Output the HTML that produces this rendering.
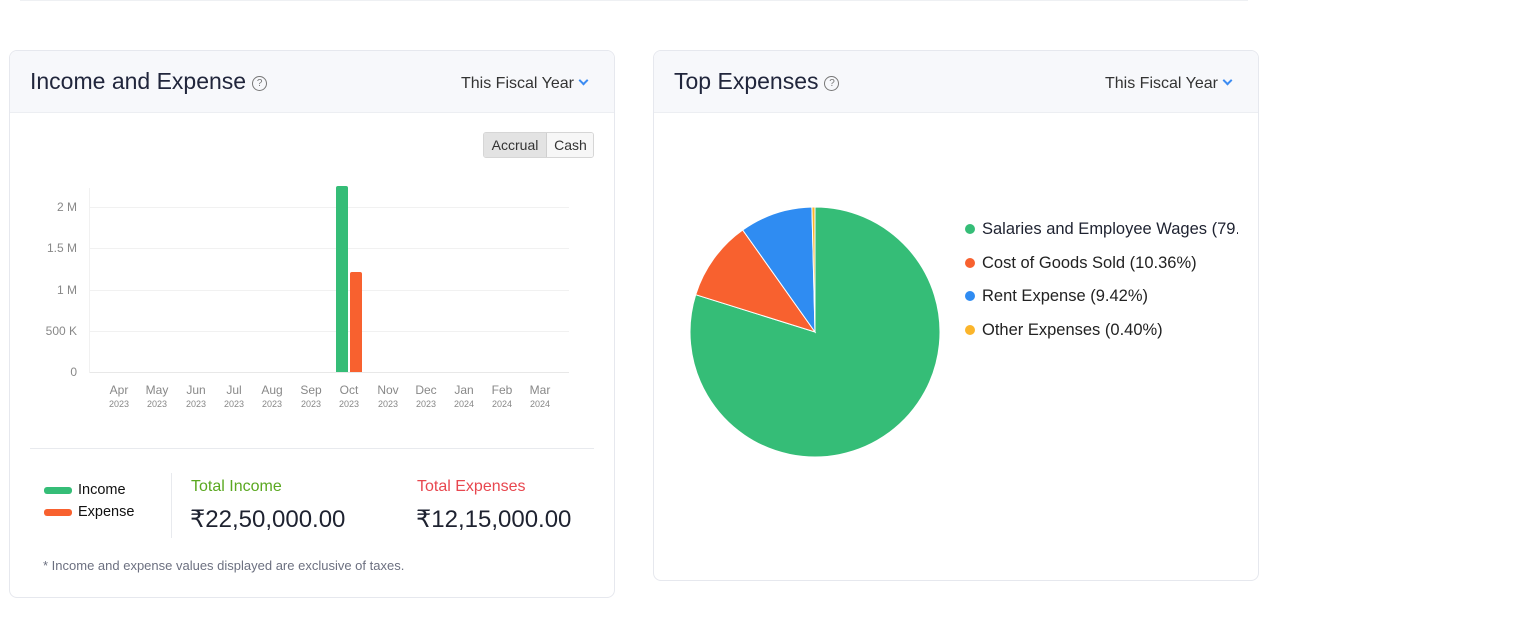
<!DOCTYPE html>
<html><head><meta charset="utf-8"><style>
*{margin:0;padding:0;box-sizing:border-box}
body{width:1520px;height:642px;background:#fff;font-family:"Liberation Sans",sans-serif;position:relative;overflow:hidden;color:#222}
.a{position:absolute;white-space:nowrap}
.card{position:absolute;border:1px solid #e6e8ee;border-radius:8px;background:#fff;overflow:hidden}
.hd{position:absolute;left:0;top:0;right:0;height:62px;background:#f7f8fb;border-bottom:1px solid #eceef2}
.ttl{font-size:23px;color:#21263c;top:17px;left:20px}
.q{display:inline-block;width:15px;height:15px;border:1px solid #777;border-radius:50%;font-size:10px;text-align:center;line-height:13px;color:#777;vertical-align:3px;margin-left:6px}
.fy{font-size:16px;color:#333;top:24px}
.chev{display:inline-block;width:7px;height:7px;border-right:2px solid #3c8cf2;border-bottom:2px solid #3c8cf2;transform:rotate(45deg);margin-left:6px;vertical-align:4px}
.yl{font-size:12px;color:#888;text-align:right;width:50px;left:27px}
.gl{position:absolute;left:90px;width:479px;height:1px;background:#f1f1f1}
.m{font-size:12px;color:#888;text-align:center;width:40px;top:383px}
.m small{display:block;font-size:9px;color:#888;margin-top:2px}
.lg{font-size:16.5px;color:#222}
.dot{position:absolute;width:10px;height:10px;border-radius:50%;left:965px}
</style></head><body>
<div class="a" style="left:20px;top:0;width:1228px;height:1px;background:#eef0f3"></div>

<div class="card" style="left:9px;top:50px;width:606px;height:548px">
  <div class="hd"></div>
  <div class="a ttl">Income and Expense<span class="q">?</span></div>
  <div class="a fy" style="left:451px">This Fiscal Year<span class="chev"></span></div>
</div>
<div class="a" style="left:483px;top:132px;width:111px;height:26px;border:1px solid #d6d6d6;border-radius:3px;overflow:hidden;font-size:14px;color:#333">
  <div class="a" style="left:0;top:0;width:63px;height:24px;background:#e3e3e3;border-right:1px solid #d0d0d0;text-align:center;line-height:24px">Accrual</div>
  <div class="a" style="left:63px;top:0;width:47px;height:24px;background:#f7f7f7;text-align:center;line-height:24px">Cash</div>
</div>
<div class="a" style="left:89px;top:188px;width:1px;height:185px;background:#f1f1f1"></div>
<div class="gl" style="top:207px"></div><div class="gl" style="top:248px"></div><div class="gl" style="top:290px"></div><div class="gl" style="top:331px"></div><div class="gl" style="top:372px;background:#e8e8e8"></div>
<div class="a yl" style="top:200px">2 M</div>
<div class="a yl" style="top:241px">1.5 M</div>
<div class="a yl" style="top:283px">1 M</div>
<div class="a yl" style="top:324px">500 K</div>
<div class="a yl" style="top:365px">0</div>
<div class="a" style="left:336px;top:186px;width:12px;height:186px;background:#35bd77;border-radius:2px 2px 0 0"></div>
<div class="a" style="left:350px;top:272px;width:12px;height:100px;background:#f8612f;border-radius:2px 2px 0 0"></div>
<div class="a m" style="left:99px">Apr<small>2023</small></div>
<div class="a m" style="left:137px">May<small>2023</small></div>
<div class="a m" style="left:176px">Jun<small>2023</small></div>
<div class="a m" style="left:214px">Jul<small>2023</small></div>
<div class="a m" style="left:252px">Aug<small>2023</small></div>
<div class="a m" style="left:291px">Sep<small>2023</small></div>
<div class="a m" style="left:329px">Oct<small>2023</small></div>
<div class="a m" style="left:368px">Nov<small>2023</small></div>
<div class="a m" style="left:406px">Dec<small>2023</small></div>
<div class="a m" style="left:444px">Jan<small>2024</small></div>
<div class="a m" style="left:482px">Feb<small>2024</small></div>
<div class="a m" style="left:520px">Mar<small>2024</small></div>
<div class="a" style="left:30px;top:448px;width:564px;height:1px;background:#e8eaee"></div>
<div class="a" style="left:44px;top:487px;width:28px;height:7px;border-radius:3px;background:#35bd77"></div>
<div class="a" style="left:44px;top:509px;width:28px;height:7px;border-radius:3px;background:#f8612f"></div>
<div class="a" style="left:78px;top:482px;font-size:14.5px;color:#111">Income</div>
<div class="a" style="left:78px;top:504px;font-size:14.5px;color:#111">Expense</div>
<div class="a" style="left:171px;top:473px;width:1px;height:65px;background:#e8eaee"></div>
<div class="a" style="left:191px;top:478px;font-size:16px;color:#5aa820">Total Income</div>
<div class="a" style="left:417px;top:478px;font-size:16px;color:#e8474f">Total Expenses</div>
<div class="a" style="left:190px;top:505px;font-size:24px;color:#1e2230">₹22,50,000.00</div>
<div class="a" style="left:416px;top:505px;font-size:24px;color:#1e2230">₹12,15,000.00</div>
<div class="a" style="left:43px;top:558px;font-size:13px;color:#6c7080">* Income and expense values displayed are exclusive of taxes.</div>

<div class="card" style="left:653px;top:50px;width:606px;height:531px">
  <div class="hd"></div>
  <div class="a ttl">Top Expenses<span class="q">?</span></div>
  <div class="a fy" style="left:451px">This Fiscal Year<span class="chev"></span></div>
</div>
<svg class="a" style="left:0;top:0" width="1520" height="642">
  <g stroke="#fff" stroke-width="1">
  <path d="M815,332 L815,207 A125,125 0 1 1 695.7,294.7 Z" fill="#35bd77"/>
  <path d="M815,332 L695.7,294.7 A125,125 0 0 1 742.7,230 Z" fill="#f8612f"/>
  <path d="M815,332 L742.7,230 A125,125 0 0 1 811.9,207 Z" fill="#2f8cf2"/>
  <path d="M815,332 L811.9,207 A125,125 0 0 1 815,207 Z" fill="#fbb52b"/>
  </g>
</svg>
<div class="dot" style="top:224px;background:#35bd77"></div>
<div class="dot" style="top:258px;background:#f8612f"></div>
<div class="dot" style="top:291px;background:#2f8cf2"></div>
<div class="dot" style="top:325px;background:#fbb52b"></div>
<div class="a" style="left:982px;top:220px;width:256px;overflow:hidden;font-size:16.5px;color:#1e2230">Salaries and Employee Wages (79.82%)</div>
<div class="a lg" style="left:982px;top:254px">Cost of Goods Sold (10.36%)</div>
<div class="a lg" style="left:982px;top:287px">Rent Expense (9.42%)</div>
<div class="a lg" style="left:982px;top:321px">Other Expenses (0.40%)</div>
</body></html>
